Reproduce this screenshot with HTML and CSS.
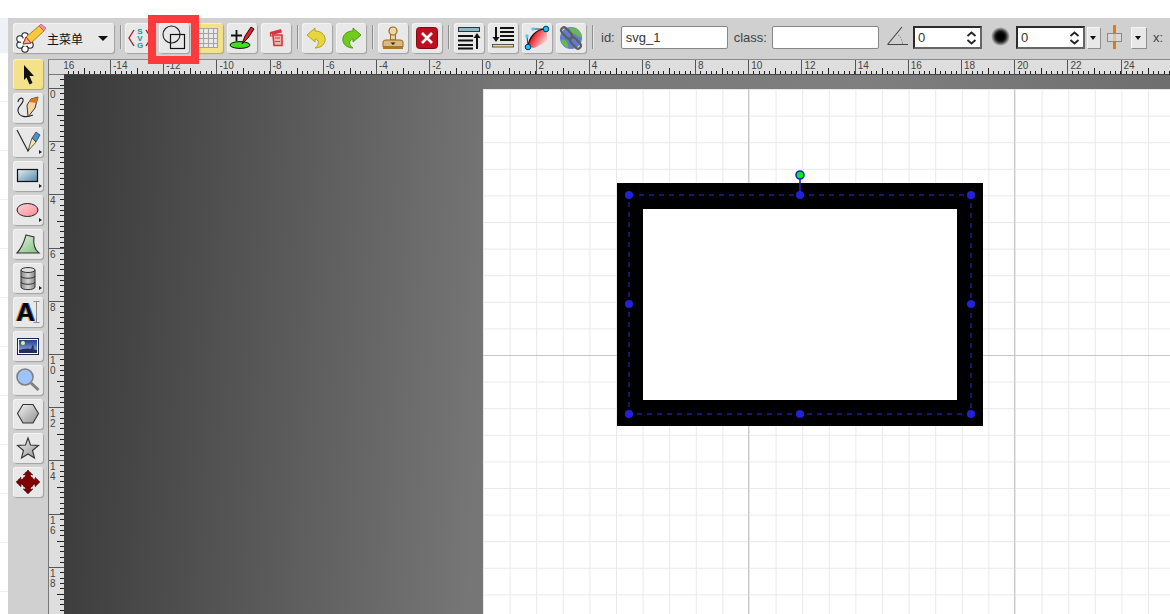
FILE: index.html
```html
<!DOCTYPE html>
<html lang="en">
<head>
  <meta charset="UTF-8" />
  <title>SVG-edit</title>
  <link rel="stylesheet" href="styles.css">
</head>
<body>
  <div class="top-gap"></div>
  <div class="layout">
    <div class="strip">
      <div class="strip-head"></div>
      <div class="strip-row"></div><div class="strip-row"></div><div class="strip-row"></div>
      <div class="strip-row"></div><div class="strip-row"></div><div class="strip-row"></div>
      <div class="strip-row"></div><div class="strip-row"></div><div class="strip-row"></div>
      <div class="strip-row"></div><div class="strip-row"></div>
    </div>

    <div class="editor">
      <div class="toolbar">
        <button class="btn menu-btn">
          <svg width="34" height="30" viewBox="0 0 34 30">
            <g fill="#fff" stroke="#222" stroke-width="1.1">
              <circle cx="12" cy="13" r="3.2"/><circle cx="17" cy="16" r="3.2"/><circle cx="17" cy="22" r="3.2"/>
              <circle cx="12" cy="26" r="3.2"/><circle cx="7" cy="22" r="3.2"/><circle cx="7" cy="16" r="3.2"/>
            </g>
            <circle cx="12" cy="19" r="4" fill="#fff"/>
            <polygon points="10,21 13,14 26,3 31,8 18,20" fill="#f5c93a" stroke="#a5641c" stroke-width=".8"/>
            <polygon points="26,3 28,1 33,5 31,8" fill="#ef8f9d" stroke="#b04a5a" stroke-width=".6"/>
            <polygon points="10,21 13,14 18,20" fill="#e8b58c" stroke="#b3262a"/>
          </svg>
          <span class="menu-label">主菜单</span>
          <span class="caret"></span>
        </button>
        <span class="sep tight"></span>

        <button class="btn">
          <svg width="30" height="30" viewBox="0 0 30 30">
            <path d="M9 7 L4 15 L9 23 M21 7 L26 15 L21 23" fill="none" stroke="#b3202a" stroke-width="1.4"/>
            <text class="svg-letters" x="15" y="11">S</text>
            <text class="svg-letters" x="15" y="18">V</text>
            <text class="svg-letters" x="15" y="25">G</text>
          </svg>
        </button>
        <button class="btn">
          <span class="callout"></span>
          <svg width="30" height="30" viewBox="0 0 30 30">
            <circle cx="12.5" cy="11.5" r="8.5" fill="none" stroke="#222" stroke-width="1.1"/>
            <rect x="11.5" y="11.5" width="14" height="14" fill="none" stroke="#111" stroke-width="1.2"/>
          </svg>
        </button>
        <button class="btn on">
          <svg width="30" height="30" viewBox="0 0 30 30">
            <rect x="5" y="5" width="20" height="20" fill="#ececec"/>
            <path d="M5 5.5H25M5 10.5H25M5 15.5H25M5 20.5H25M5 24.5H25M5.5 5V25M10.5 5V25M15.5 5V25M20.5 5V25M24.5 5V25" stroke="#a5a5a5" stroke-width="1.2"/>
          </svg>
        </button>
        <button class="btn">
          <svg width="30" height="30" viewBox="0 0 30 30">
            <ellipse cx="13" cy="22" rx="10" ry="3.4" fill="#3fe01c" stroke="#111"/>
            <path d="M9.5 7V18M4 12.5H15" stroke="#111" stroke-width="1.8"/>
            <polygon points="15,21 18,13 24,4 27,6 21,15" fill="#ea1c24" stroke="#111"/>
          </svg>
        </button>
        <button class="btn">
          <svg width="30" height="30" viewBox="0 0 30 30">
            <path d="M9 9 L20 6 L21 9.5 L11 12Z" fill="#d8353c"/>
            <path d="M12 12H21V22.5H13Z" fill="#f3b4b4" stroke="#d8353c" stroke-width="1.6"/>
            <path d="M14 15H19M14 18.5H19M9.5 9V13H12" fill="none" stroke="#d8353c" stroke-width="1.2"/>
          </svg>
        </button>
        <span class="sep tight"></span>

        <button class="btn">
          <svg width="30" height="30" viewBox="0 0 30 30">
            <path d="M13 8 C20 8 24 13 23 18 C22 23 17 25 13 25 C16 23 17 20 16 18 C15 16 14 16 13 16 L13 19 L5 12 L13 5Z" fill="#e9d63f" stroke="#b0a01e"/>
          </svg>
        </button>
        <button class="btn">
          <svg width="30" height="30" viewBox="0 0 30 30">
            <path d="M17 8 C10 8 6 13 7 18 C8 23 13 25 17 25 C14 23 13 20 14 18 C15 16 16 16 17 16 L17 19 L25 12 L17 5Z" fill="#6fcb1f" stroke="#4e9c14"/>
          </svg>
        </button>
        <span class="sep"></span>

        <button class="btn">
          <svg width="30" height="30" viewBox="0 0 30 30">
            <rect x="12.5" y="10" width="5" height="7" fill="#ecd29f" stroke="#96691f"/>
            <circle cx="15" cy="8" r="4" fill="#edd6a6" stroke="#96691f" stroke-width="1.2"/>
            <path d="M5 24 V19 Q5 17 8 17 H22 Q25 17 25 19 V24Z" fill="#dcb97e" stroke="#96691f"/>
            <rect x="5" y="23" width="20" height="3" fill="#a8782c"/>
            <polygon points="12.5,19.5 17.5,19.5 15,22" fill="#222"/>
          </svg>
        </button>
        <button class="btn">
          <svg width="30" height="30" viewBox="0 0 30 30">
            <rect x="4.5" y="4.5" width="21" height="21" rx="3" fill="#bd0f1e" stroke="#7d0a14"/>
            <path d="M10 10 L20 20 M20 10 L10 20" stroke="#fff" stroke-width="2.6"/>
          </svg>
        </button>
        <span class="sep"></span>

        <button class="btn">
          <svg width="30" height="30" viewBox="0 0 30 30">
            <rect x="4.5" y="4.5" width="21" height="4" fill="#8fb6c8" stroke="#333"/>
            <path d="M4 13H19M4 17.5H19M4 22H19M4 25.5H19" stroke="#111" stroke-width="2"/>
            <path d="M23 26V13" stroke="#111" stroke-width="2"/>
            <polygon points="23,10 19.5,15 26.5,15" fill="#111"/>
          </svg>
        </button>
        <button class="btn">
          <svg width="30" height="30" viewBox="0 0 30 30">
            <path d="M8 4V15" stroke="#111" stroke-width="2"/>
            <polygon points="8,19 4.5,14 11.5,14" fill="#111"/>
            <path d="M12 5H26M12 9H26M12 13H26M12 17H26" stroke="#111" stroke-width="2"/>
            <rect x="4.5" y="21.5" width="21" height="2.5" fill="#eedd88" stroke="#333" stroke-width=".8"/>
          </svg>
        </button>
        <button class="btn">
          <svg width="30" height="30" viewBox="0 0 30 30">
            <defs>
              <linearGradient id="curveFill" x1="0" y1="0" x2="1" y2=".6">
                <stop offset=".35" stop-color="#ee1c25"/><stop offset="1" stop-color="#fbe4e4"/>
              </linearGradient>
            </defs>
            <path d="M6 24 C7 14 14 6 24 6 L26 18 L12 25Z" fill="url(#curveFill)"/>
            <path d="M6 24 C7 14 14 6 24 6" fill="none" stroke="#111" stroke-width="1.2"/>
            <path d="M24 6H11M6 24L5 13" stroke="#111" stroke-width=".8"/>
            <circle cx="6" cy="24" r="2.8" fill="#0cf" stroke="#036"/>
            <circle cx="24" cy="6" r="2.8" fill="#0cf" stroke="#036"/>
            <circle cx="11" cy="6" r="1.8" fill="#5cf"/>
            <circle cx="5" cy="13" r="1.8" fill="#5cf"/>
          </svg>
        </button>
        <button class="btn">
          <svg width="30" height="30" viewBox="0 0 30 30">
            <circle cx="15" cy="15" r="11" fill="#5f7ed2"/>
            <path d="M13 5 C19 3 25 8 26 14 C21 15 20 10 16 10Z M5 17 C9 15 13 20 12 25 C8 24 6 21 5 17Z" fill="#68b84e"/>
            <g fill="none" stroke="#5e5e5e" stroke-width="2.2">
              <rect x="4" y="7" width="13" height="6" rx="3" transform="rotate(48 10.5 10)"/>
              <rect x="13" y="17" width="13" height="6" rx="3" transform="rotate(48 19.5 20)"/>
            </g>
          </svg>
        </button>
        <span class="sep after-buttons"></span>

        <label class="field-label">id:</label>
        <input class="text-field id-field" type="text" value="svg_1">
        <label class="field-label class-label">class:</label>
        <input class="text-field class-field" type="text">

        <svg class="angle-icon" width="21" height="20" viewBox="0 0 21 20">
          <path d="M0.5 18.5H21M0.5 18.5L15 1" fill="none" stroke="#444" stroke-width="1.1"/>
          <path d="M11 8.5 Q15 12 15.5 18" fill="none" stroke="#777" stroke-width=".9" stroke-dasharray="1.5 1.5"/>
        </svg>
        <div class="spinner">
          <input type="text" value="0">
          <svg width="11" height="14" viewBox="0 0 11 14">
            <path d="M1.5 5 L5.5 1.5 L9.5 5 M1.5 9 L5.5 12.5 L9.5 9" fill="none" stroke="#222" stroke-width="1.8"/>
          </svg>
        </div>
        <span class="blur-icon"></span>
        <div class="spinner">
          <input type="text" value="0">
          <svg width="11" height="14" viewBox="0 0 11 14">
            <path d="M1.5 5 L5.5 1.5 L9.5 5 M1.5 9 L5.5 12.5 L9.5 9" fill="none" stroke="#222" stroke-width="1.8"/>
          </svg>
        </div>
        <button class="drop"><span class="caret small"></span></button>
        <svg class="opacity-icon" width="17" height="26" viewBox="0 0 17 26">
          <path d="M7.5 1V25" stroke="#e07b0c" stroke-width="3"/>
          <rect x="0.5" y="9.5" width="14" height="8" fill="#ddd" fill-opacity=".7" stroke="#888"/>
        </svg>
        <button class="drop wide"><span class="caret small"></span></button>
        <label class="field-label x-label">x:</label>
      </div>

      <div class="main">
        <div class="tools">
          <button class="btn on">
            <svg width="30" height="30" viewBox="0 0 30 30">
              <polygon points="11,6 21,17 16.5,17 19.5,24 16.5,25.5 13.5,18.5 11,21" fill="#111"/>
            </svg>
          </button>
          <button class="btn">
            <svg width="30" height="30" viewBox="0 0 30 30">
              <path d="M5 9 C6 4 11 4 10 8 C9 12 4 14 5 18 C6 24 13 25 20 22" fill="none" stroke="#222" stroke-width="1.1"/>
              <polygon points="15,24 14,12 18,6 25,4 22,15" fill="#f6d6a4" stroke="#222" stroke-width=".9"/>
              <polygon points="16,9 18,6 25,4 23.5,10" fill="#d9791a"/>
            </svg>
          </button>
          <button class="btn">
            <svg width="30" height="30" viewBox="0 0 30 30">
              <path d="M4 3 L15 24 L18 18" fill="none" stroke="#222" stroke-width="1.1"/>
              <polygon points="15,24 17,17 19,11 23,15" fill="#f4e6a8" stroke="#222" stroke-width=".7"/>
              <polygon points="19,11 23,5 27,8 23,15" fill="#4b8ed0" stroke="#234" stroke-width=".7"/>
              <polygon points="26,23 29,25 26,27" fill="#222"/>
            </svg>
          </button>
          <button class="btn">
            <svg width="30" height="30" viewBox="0 0 30 30">
              <defs>
                <linearGradient id="rectFill" x1="0" y1="0" x2="1" y2="1">
                  <stop offset="0" stop-color="#e8f0f4"/><stop offset="1" stop-color="#4f86a4"/>
                </linearGradient>
              </defs>
              <rect x="4.5" y="8.5" width="20" height="12" fill="url(#rectFill)" stroke="#111" stroke-width="1.2"/>
              <polygon points="26,23 29,25 26,27" fill="#222"/>
            </svg>
          </button>
          <button class="btn">
            <svg width="30" height="30" viewBox="0 0 30 30">
              <defs>
                <linearGradient id="ellipseFill" x1="0" y1="0" x2="1" y2="1">
                  <stop offset="0" stop-color="#ffd0d4"/><stop offset="1" stop-color="#ff8d98"/>
                </linearGradient>
              </defs>
              <ellipse cx="14.5" cy="15" rx="10.5" ry="6.5" fill="url(#ellipseFill)" stroke="#222"/>
              <polygon points="26,23 29,25 26,27" fill="#222"/>
            </svg>
          </button>
          <button class="btn">
            <svg width="30" height="30" viewBox="0 0 30 30">
              <defs>
                <linearGradient id="shapeFill" x1="0" y1="0" x2="1" y2="1">
                  <stop offset="0" stop-color="#e2f2de"/><stop offset="1" stop-color="#7fc07c"/>
                </linearGradient>
              </defs>
              <path d="M13 6 L21 8 C20 15 21 20 26 24 L4 24 C8 20 11 13 13 6Z" fill="url(#shapeFill)" stroke="#333" stroke-width="1.1"/>
            </svg>
          </button>
          <button class="btn">
            <svg width="30" height="30" viewBox="0 0 30 30">
              <defs>
                <linearGradient id="dbFill" x1="0" y1="0" x2="1" y2="0">
                  <stop offset="0" stop-color="#8a8a8a"/><stop offset=".5" stop-color="#d4d4d4"/><stop offset="1" stop-color="#8a8a8a"/>
                </linearGradient>
              </defs>
              <path d="M8 7 V24 C8 27.5 22 27.5 22 24 V7Z" fill="url(#dbFill)" stroke="#333"/>
              <ellipse cx="15" cy="7" rx="7" ry="2.5" fill="#ddd" stroke="#333"/>
              <path d="M8 13 C8 16 22 16 22 13 M8 19 C8 22 22 22 22 19" fill="none" stroke="#333"/>
              <polygon points="26,23 29,25 26,27" fill="#222"/>
            </svg>
          </button>
          <button class="btn text-tool">
            <span class="big-a">A</span>
            <svg class="ibeam" width="7" height="22" viewBox="0 0 7 22">
              <path d="M0.5 .5H6.5M3.5 .5V21.5M0.5 21.5H6.5" fill="none" stroke="#8c8c8c" stroke-width="1"/>
            </svg>
          </button>
          <button class="btn">
            <svg width="30" height="30" viewBox="0 0 30 30">
              <defs>
                <linearGradient id="skyFill" x1="0" y1="0" x2="0" y2="1">
                  <stop offset="0" stop-color="#24408e"/><stop offset="1" stop-color="#9db8e6"/>
                </linearGradient>
              </defs>
              <rect x="4.5" y="7.5" width="21" height="16" fill="#fff" stroke="#1c2a4a"/>
              <rect x="6" y="9" width="18" height="13" fill="url(#skyFill)"/>
              <circle cx="10" cy="12" r="2" fill="#f5e98a"/>
              <path d="M6 22 L6 19 Q14 16 24 19 L24 22Z" fill="#20305c"/>
              <path d="M18 18 L20 13 L21 18Z" fill="#27365e"/>
            </svg>
          </button>
          <button class="btn">
            <svg width="30" height="30" viewBox="0 0 30 30">
              <path d="M18 18 L25.5 25" stroke="#808080" stroke-width="3"/>
              <circle cx="12" cy="12" r="8" fill="#9cc4fb" stroke="#808080" stroke-width="1.6"/>
            </svg>
          </button>
          <button class="btn">
            <svg width="30" height="30" viewBox="0 0 30 30">
              <defs>
                <linearGradient id="hexFill" x1="0" y1="0" x2="1" y2="1">
                  <stop offset="0" stop-color="#f4f4f4"/><stop offset="1" stop-color="#8f8f8f"/>
                </linearGradient>
              </defs>
              <polygon points="10,5.5 20,5.5 25.5,14.5 20,24 10,24 4.5,14.5" fill="url(#hexFill)" stroke="#333" stroke-width="1.1"/>
            </svg>
          </button>
          <button class="btn">
            <svg width="30" height="30" viewBox="0 0 30 30">
              <defs>
                <linearGradient id="starFill" x1="0" y1="0" x2="1" y2="1">
                  <stop offset="0" stop-color="#f4f4f4"/><stop offset="1" stop-color="#909090"/>
                </linearGradient>
              </defs>
              <polygon points="15,5 17.5,12 25.5,12.5 19.5,17.5 21.5,25 15,21 8.5,25 10.5,17.5 4.5,12.5 12.5,12" fill="url(#starFill)" stroke="#333" stroke-width="1.1"/>
            </svg>
          </button>
          <button class="btn">
            <svg width="30" height="30" viewBox="0 0 30 30">
              <polygon points="15,3 20,8 17.5,8 17.5,12.5 22,12.5 22,10 27,15 22,20 22,17.5 17.5,17.5 17.5,22 20,22 15,27 10,22 12.5,22 12.5,17.5 8,17.5 8,20 3,15 8,10 8,12.5 12.5,12.5 12.5,8 10,8" fill="#800000" stroke="#444" stroke-width=".9" stroke-dasharray="2 1"/>
              <circle cx="15" cy="15" r="6.5" fill="#800000"/>
            </svg>
          </button>
        </div>

        <div class="stage">
          <div class="corner"></div>
          <div class="ruler-top">
            <div class="cell first">-16</div><div class="cell">-14</div><div class="cell">-12</div>
            <div class="cell">-10</div><div class="cell">-8</div><div class="cell">-6</div>
            <div class="cell">-4</div><div class="cell">-2</div><div class="cell">0</div>
            <div class="cell">2</div><div class="cell">4</div><div class="cell">6</div>
            <div class="cell">8</div><div class="cell">10</div><div class="cell">12</div>
            <div class="cell">14</div><div class="cell">16</div><div class="cell">18</div>
            <div class="cell">20</div><div class="cell">22</div><div class="cell">24</div>
          </div>
          <div class="ruler-left">
            <div class="vcell stub"></div>
            <div class="vcell">0</div><div class="vcell">2</div><div class="vcell">4</div>
            <div class="vcell">6</div><div class="vcell">8</div><div class="vcell">1<br>0</div>
            <div class="vcell">1<br>2</div><div class="vcell">1<br>4</div><div class="vcell">1<br>6</div>
            <div class="vcell">1<br>8</div>
          </div>
          <div class="workarea">
            <svg class="canvas" width="687" height="525" viewBox="0 0 687 525">
              <defs>
                <pattern id="minorGrid" width="26.6" height="26.6" patternUnits="userSpaceOnUse">
                  <path d="M0 0.5H26.6M0.5 0V26.6" fill="none" stroke="#e9e9e9" stroke-width="1"/>
                </pattern>
              </defs>
              <rect width="687" height="525" fill="#fff"/>
              <rect width="687" height="525" fill="url(#minorGrid)"/>
              <path d="M265.5 0V525M531.5 0V525M0 266.5H687" stroke="#c8c8c8" stroke-width="1"/>
              <rect x="147" y="107" width="340" height="217" fill="#fff" stroke="#000" stroke-width="26"/>
              <rect x="146" y="106" width="342" height="219" fill="none" stroke="#20208c" stroke-width="1.4" stroke-dasharray="5 5"/>
              <path d="M317 86V106" stroke="#2222cc" stroke-width="1.6"/>
              <g fill="#2222dd">
                <circle cx="146" cy="106" r="4"/><circle cx="317" cy="106" r="4"/><circle cx="488" cy="106" r="4"/>
                <circle cx="146" cy="215" r="4"/><circle cx="488" cy="215" r="4"/>
                <circle cx="146" cy="325" r="4"/><circle cx="317" cy="325" r="4"/><circle cx="488" cy="325" r="4"/>
              </g>
              <circle cx="317" cy="86" r="4" fill="#00ee00" stroke="#2222cc" stroke-width="1.6"/>
            </svg>
          </div>
        </div>
      </div>
    </div>
  </div>
</body>
</html>
```

FILE: styles.css
```css
* {
  box-sizing: border-box;
}

html, body {
  height: 100%;
}

body {
  margin: 0;
  overflow: hidden;
  background-color: #fff;
  font-family: "Liberation Sans", Arial, sans-serif;
  color: #333;
}

.top-gap {
  height: 18px;
}

.layout {
  display: flex;
  height: 596px;
}

.strip {
  flex: 0 0 8px;
  overflow: hidden;
}

.strip-head {
  height: 35px;
  background-color: #eef2f6;
}

.strip-row {
  height: 49px;
  border-bottom: 1px solid #eceff5;
}

.editor {
  flex: 1;
  min-width: 0;
  display: flex;
  flex-direction: column;
  background-color: #d0d0d0;
}

/* top toolbar */
.toolbar {
  flex: 0 0 41px;
  display: flex;
  align-items: flex-start;
  padding: 5px 0 0 5px;
  white-space: nowrap;
  overflow: visible;
}

.btn {
  position: relative;
  flex: 0 0 30px;
  width: 30px;
  height: 30px;
  margin-right: 4px;
  padding: 0;
  border: none;
  border-radius: 3px;
  background-color: #e8e8e8;
  box-shadow: inset 1px 1px 0 #f3f3f3, 1px 1px 1px #a0a0a0;
}

.btn svg {
  display: block;
}

.btn.on {
  background-color: #f4e28a;
  box-shadow: inset 1px 1px 0 #faf0b8, 1px 1px 1px #b0a870;
}

.menu-btn {
  flex: 0 0 101px;
  width: 101px;
  margin-right: 0;
  display: flex;
  align-items: center;
}

.menu-label {
  margin-left: 0;
  font-family: "Liberation Sans", "Noto Sans CJK SC", sans-serif;
  font-size: 12px;
  color: #111;
}

.caret {
  width: 0;
  height: 0;
  margin-left: 15px;
  border-left: 5px solid transparent;
  border-right: 5px solid transparent;
  border-top: 5px solid #111;
}

.caret.small {
  display: block;
  margin: 0 auto;
  border-left-width: 3.5px;
  border-right-width: 3.5px;
  border-top-width: 4px;
}

.sep {
  flex: 0 0 2px;
  height: 24px;
  margin: 2px 4px 0 6px;
  border-left: 1px solid #8f8f8f;
  border-right: 1px solid #e6e6e6;
}

.sep.tight {
  margin-right: 3px;
}

.btn + .sep {
  margin-left: 2px;
}

.menu-btn + .sep {
  margin-left: 6px;
}

.svg-letters {
  font-family: "Liberation Sans", Arial, sans-serif;
  font-size: 8px;
  font-weight: bold;
  fill: #0a9a9a;
  text-anchor: middle;
}

/* red box drawn over the screenshot */
.callout {
  position: absolute;
  top: -8px;
  left: -11px;
  width: 51px;
  height: 49px;
  border: 8px solid #fb3a3c;
  z-index: 5;
}

.field-label {
  margin: 6px 0 0 0;
  font-size: 13px;
  line-height: 17px;
  color: #444;
}

.after-buttons {
  margin-right: 7px;
}

.text-field {
  width: 107px;
  height: 23px;
  margin: 3px 0 0 6px;
  padding: 0 4px;
  border: 1px solid #868686;
  border-radius: 2px;
  background-color: #fff;
  font-family: "Liberation Sans", Arial, sans-serif;
  font-size: 13px;
  color: #333;
}

.class-label {
  margin-left: 6px;
}

.class-field {
  margin-left: 5px;
}

.angle-icon {
  margin: 3px 0 0 8px;
}

.spinner {
  display: flex;
  align-items: center;
  width: 69px;
  height: 23px;
  margin: 3px 0 0 5px;
  padding-right: 3px;
  background-color: #fff;
  border: 2px solid;
  border-color: #2c2c2c #666 #666 #2c2c2c;
}

.spinner input {
  flex: 1;
  min-width: 0;
  height: 17px;
  padding: 0 0 0 3px;
  border: none;
  outline: none;
  background: transparent;
  font-family: "Liberation Sans", Arial, sans-serif;
  font-size: 13px;
  color: #333;
}

.blur-icon {
  flex: 0 0 19px;
  width: 19px;
  height: 19px;
  margin: 4px 0 0 9px;
  border-radius: 50%;
  background: radial-gradient(circle closest-side, #000 35%, #222 58%, rgba(0, 0, 0, 0) 100%);
}

.blur-icon + .spinner {
  margin-left: 6px;
}

.drop {
  flex: 0 0 13px;
  width: 13px;
  height: 21px;
  margin: 4px 0 0 2px;
  padding: 0;
  border: none;
  background-color: #e8e8e8;
  box-shadow: inset 1px 1px 0 #f6f6f6, 1px 1px 0 #8e8e8e;
}

.drop.wide {
  flex-basis: 15px;
  width: 15px;
  margin-left: 7px;
}

.opacity-icon {
  margin: 1px 0 0 7px;
}

.x-label {
  margin-left: 7px;
}

/* left tools + canvas */
.main {
  flex: 1;
  min-height: 0;
  display: flex;
}

.tools {
  flex: 0 0 40px;
  display: flex;
  flex-direction: column;
  gap: 4px;
  padding-left: 5px;
}

.tools .btn {
  flex: 0 0 30px;
  margin-right: 0;
}

.text-tool {
  display: flex;
  align-items: center;
  padding-left: 3px;
}

.big-a {
  font-size: 26px;
  font-weight: bold;
  line-height: 30px;
  color: #000;
  text-shadow: -1px 0 0 #e88a1c, 1px 0 0 #1c66cc;
}

.btn .ibeam {
  margin-left: -1.5px;
}

.stage {
  flex: 1;
  min-width: 0;
  display: grid;
  grid-template-columns: 16px 1fr;
  grid-template-rows: 15px 1fr;
  border-top: 1px solid #8a8a8a;
  overflow: hidden;
}

.corner {
  background-color: #dedede;
  border-left: 1px solid #777;
  border-bottom: 1px solid #777;
}

.ruler-top {
  display: flex;
  overflow: hidden;
  background-color: #dedede;
  border-bottom: 1px solid #444;
}

.cell {
  flex: 0 0 53.2px;
  padding: 1px 0 0 2px;
  border-left: 1px solid #555;
  font-size: 10px;
  line-height: 10px;
  color: #444;
  background-image:
    repeating-linear-gradient(to right, transparent 0, transparent 4.32px, #222 4.32px, #222 5.32px),
    linear-gradient(to right, transparent 25.6px, #222 25.6px, #222 26.6px, transparent 26.6px);
  background-repeat: no-repeat;
  background-size: 100% 3px, 100% 6px;
  background-position: left bottom;
}

.cell.first {
  margin-left: -7.2px;
}

/* last cell runs on past the window edge */
.cell:last-child {
  flex-basis: 60px;
}

.ruler-left {
  overflow: hidden;
  background-color: #dedede;
  border-left: 1px solid #777;
}

.vcell {
  height: 53.2px;
  padding: 1px 0 0 1px;
  border-top: 1px solid #555;
  font-size: 10px;
  line-height: 10px;
  color: #444;
  background-image:
    repeating-linear-gradient(to bottom, transparent 0, transparent 4.32px, #222 4.32px, #222 5.32px),
    linear-gradient(to bottom, transparent 25.6px, #222 25.6px, #222 26.6px, transparent 26.6px);
  background-repeat: no-repeat;
  background-size: 4px 100%, 7px 100%;
  background-position: right top;
}

.vcell.stub {
  height: 13px;
  border-top: none;
}

.workarea {
  min-width: 0;
  min-height: 0;
  overflow: hidden;
  padding: 14px 0 0 419px;
  background: linear-gradient(94deg, #393939 0, #767676 440px, #7f7f7f 800px, #6e6e6e 1110px);
}

.canvas {
  display: block;
}
```
